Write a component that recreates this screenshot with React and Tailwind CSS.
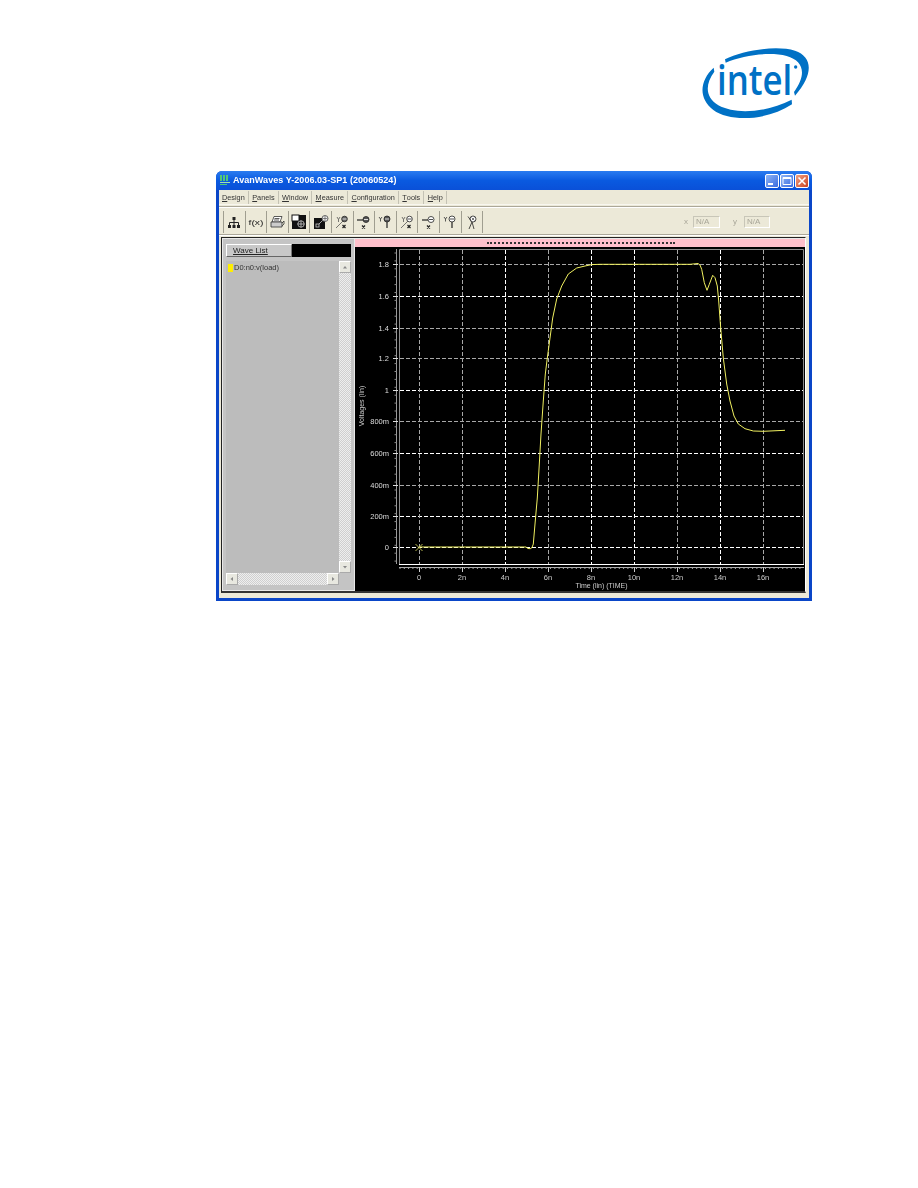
import React from 'react'

const font = { fontFamily: '"Liberation Sans", Arial, sans-serif' }

const menus = ['Design', 'Panels', 'Window', 'Measure', 'Configuration', 'Tools', 'Help']

const xLabels = [
  ['0', 419, false], ['2n', 462, false], ['4n', 505, true], ['6n', 548, false], ['8n', 591, true],
  ['10n', 634, true], ['12n', 677, false], ['14n', 720, true], ['16n', 763, false],
]
const yLabels = [
  ['1.8', 263, false], ['1.6', 295, true], ['1.4', 327, false], ['1.2', 357, false], ['1', 389, true],
  ['800m', 420, false], ['600m', 452, true], ['400m', 484, false], ['200m', 515, true], ['0', 546, true],
]

const curve = '419,546 526,546 528,547.5 530.3,547.7 532,546.5 533.3,543 535,523 537.3,497 539.3,463 541,433 543.3,400 545.3,373 547.3,357 550,337 552.7,317 556.7,298 561.7,285 568.3,273 576.7,267 585,265 591.7,263.6 600,263.3 690,263.3 698,262.5 700,264 701.7,268.3 704.3,281.7 707,289.3 709.3,283.3 712.7,274.3 715,276.7 717.3,285 718.7,300 720.7,327 723.3,357 726.7,383 730,400 734,415 738.3,423 745,427.7 753.3,430 763.3,430.3 785,429.3'

function IntelLogo() {
  return (
    <svg width="150" height="110" viewBox="0 0 450 330">
      <path fill="#0071c5" d="M135 88C190 60 290 45 345 62C398 80 402 132 345 197L342 186C382 132 370 92 320 78C270 65 190 75 137 98Z" />
      <path fill="#0071c5" d="M101 113C60 150 53 205 100 240C150 277 262 272 336 223L335 209C262 246 170 256 115 226C75 202 75 162 103 125Z" />
      <text x="111" y="195" textLength="226" lengthAdjust="spacingAndGlyphs" fontSize="122" fontWeight="600" fill="#0071c5" style={{ fontFamily: '"Open Sans", sans-serif' }}>intel</text>
      <circle cx="347" cy="111" r="5" fill="#0071c5" />
    </svg>
  )
}

function WinButton({ kind }) {
  const bg = kind === 'close'
    ? 'bg-gradient-to-br from-[#f0a080] to-[#c8401c]'
    : 'bg-gradient-to-br from-[#8fb4f4] to-[#3a6ae0]'
  return (
    <div className={`w-[14px] h-[14px] rounded-[2px] border border-white flex items-center justify-center ${bg}`}>
      <svg width="10" height="10" viewBox="0 0 10 10">
        {kind === 'min' && <rect x="1" y="7" width="5" height="2" fill="#fff" />}
        {kind === 'max' && <path d="M1 1.5h8v7h-8zM1 2.5h8" fill="none" stroke="#fff" strokeWidth="1" />}
        {kind === 'close' && <path d="M1.5 1.5l7 7M8.5 1.5l-7 7" stroke="#fff" strokeWidth="1.6" />}
      </svg>
    </div>
  )
}

// toolbar icons share a 16x16 box
function ToolIcon({ name }) {
  const stroke = { stroke: '#222', strokeWidth: 1, fill: 'none' }
  let body = null
  if (name === 'tree') {
    body = (
      <>
        <rect x="6.5" y="3" width="3" height="3" fill="#222" />
        <rect x="2" y="11" width="3" height="3" fill="#222" />
        <rect x="6.5" y="11" width="3" height="3" fill="#222" />
        <rect x="11" y="11" width="3" height="3" fill="#222" />
        <path d="M8 6v5M3.5 11V8.5h9V11" {...stroke} />
      </>
    )
  } else if (name === 'fx') {
    body = <text x="0.5" y="11" fontSize="8" fill="#222" textLength="15" lengthAdjust="spacingAndGlyphs" style={{ fontFamily: '"Liberation Sans", sans-serif' }}>f(x)</text>
  } else if (name === 'print') {
    body = (
      <>
        <path d="M5 2.5h8l-2 5.5H3z" fill="#fff" stroke="#333" strokeWidth="0.8" />
        <path d="M2 8h11v5H2z" fill="#ccc" stroke="#333" strokeWidth="0.8" />
        <path d="M5.5 4.5h5M5 6h5M13 9l2-2v3l-2 2" stroke="#333" strokeWidth="0.8" fill="none" />
      </>
    )
  } else if (name === 'black1') {
    body = (
      <>
        <rect x="1" y="1" width="14" height="14" fill="#111" />
        <rect x="1" y="1" width="7" height="6" fill="#fff" stroke="#111" />
        <circle cx="10" cy="10" r="3.2" fill="none" stroke="#ccc" strokeWidth="0.8" />
        <path d="M10 6.5v7M6.5 10h7" stroke="#ccc" strokeWidth="0.8" />
      </>
    )
  } else if (name === 'black2') {
    body = (
      <>
        <rect x="1" y="4" width="11" height="11" fill="#111" />
        <rect x="3" y="10" width="3" height="3" fill="none" stroke="#ccc" strokeWidth="0.8" />
        <path d="M6 10l4-4" stroke="#ccc" strokeWidth="0.8" />
        <circle cx="12" cy="4.5" r="3" fill="#eee" stroke="#444" strokeWidth="0.8" />
        <path d="M12 2v5M9.5 4.5h5" stroke="#444" strokeWidth="0.6" />
      </>
    )
  } else if (name === 'yxPlus' || name === 'yxMinus') {
    body = (
      <>
        <path d="M3 3l1.5 2.5L6 3M4.5 5.5V8M2 14l7-7" stroke="#444" strokeWidth="0.7" fill="none" />
        <circle cx="10.5" cy="5" r="2.8" fill={name === 'yxPlus' ? '#666' : '#fff'} stroke="#222" strokeWidth="0.8" />
        <path d="M8.5 5h4" stroke={name === 'yxPlus' ? '#fff' : '#222'} strokeWidth="0.8" />
        <path d="M8.5 11l3 3M11.5 11l-3 3" stroke="#222" strokeWidth="1.2" />
      </>
    )
  } else if (name === 'xPlus' || name === 'xMinus') {
    body = (
      <>
        <path d="M1 6h6" stroke="#222" strokeWidth="1.2" />
        <circle cx="10" cy="5.5" r="3" fill={name === 'xPlus' ? '#555' : '#fff'} stroke="#222" strokeWidth="0.8" />
        <path d="M8 5.5h4" stroke={name === 'xPlus' ? '#fff' : '#222'} strokeWidth="0.8" />
        <path d="M6 11.5l3 3M9 11.5l-3 3" stroke="#222" strokeWidth="1.2" />
      </>
    )
  } else if (name === 'yPlus' || name === 'yMinus') {
    body = (
      <>
        <path d="M2 3l1.5 2L5 3M3.5 5v2.5" stroke="#333" strokeWidth="0.8" fill="none" />
        <circle cx="10" cy="5" r="3" fill={name === 'yPlus' ? '#555' : '#fff'} stroke="#222" strokeWidth="0.8" />
        <path d="M8 5h4" stroke={name === 'yPlus' ? '#fff' : '#222'} strokeWidth="0.8" />
        <path d="M10 8v6" stroke="#222" strokeWidth="1.2" />
      </>
    )
  } else if (name === 'last') {
    body = (
      <>
        <circle cx="9" cy="5" r="3" fill="#fff" stroke="#222" strokeWidth="0.8" />
        <path d="M7.5 3.5l3 3M10.5 3.5l-3 3" stroke="#222" strokeWidth="0.6" />
        <path d="M4 2.5l2.5 3.5M5 15l3-7 2 7" {...stroke} strokeWidth="0.8" />
      </>
    )
  }
  return <svg width="16" height="16" viewBox="0 0 16 16">{body}</svg>
}

const tools = ['tree', 'fx', 'print', 'black1', 'black2', 'yxPlus', 'xPlus', 'yPlus', 'yxMinus', 'xMinus', 'yMinus', 'last']

function ScrollArrow({ dir }) {
  const d = { up: 'M2 5.5L4 3l2 2.5z', down: 'M2 3l2 2.5L6 3z', left: 'M5 2L2.5 4L5 6z', right: 'M3 2L5.5 4L3 6z' }[dir]
  return (
    <div className="w-[12px] h-[12px] shrink-0 bg-[#e8e8e0] border-t border-l border-white border-r border-b border-r-[#aaa] border-b-[#aaa] flex items-center justify-center">
      <svg width="8" height="8" viewBox="0 0 8 8"><path d={d} fill="#888" /></svg>
    </div>
  )
}

function Plot() {
  const labelStyle = { fontFamily: '"Liberation Sans", sans-serif', fontSize: 7.5 }
  const titleStyle = { fontFamily: '"Liberation Sans", sans-serif', fontSize: 7 }
  const minorX = []
  for (let x = 400; x < 804; x += 4.3) minorX.push(x)
  const minorY = []
  for (let y = 252; y < 562; y += 7.9) minorY.push(y)
  return (
    <svg className="block" width="450" height="344" viewBox="355 246 450 344">
      <rect x="355" y="246" width="450" height="344" fill="#000" />
      {yLabels.map(([t, y, bright]) => (
        <path key={t} d={`M400 ${y + 0.5}H803`} stroke={bright ? '#fff' : '#a8a8a8'} strokeDasharray="4 2" />
      ))}
      {xLabels.map(([t, x, bright]) => (
        <path key={t} d={`M${x + 0.5} 249V563`} stroke={bright ? '#fff' : '#a8a8a8'} strokeDasharray="4 2" />
      ))}
      <path d="M399.5 563V248.5H803.5V563" fill="none" stroke="#8a8a8a" />
      <path d="M399 563.5H804" stroke="#fff" />
      <path d="M396.5 248V563" stroke="#9a9a9a" />
      {minorY.map(y => <path key={y} d={`M394.5 ${y}h2`} stroke="#888" />)}
      {yLabels.map(([t, y]) => <path key={t} d={`M393 ${y + 0.5}h5`} stroke="#ddd" />)}
      <path d="M399 566.5H804" stroke="#aaa" />
      {minorX.map(x => <path key={x} d={`M${x} 566v2`} stroke="#aaa" />)}
      {xLabels.map(([t, x]) => <path key={t} d={`M${x + 0.5} 566v5`} stroke="#ccc" />)}
      <polyline points={curve} fill="none" stroke="#f0f060" strokeWidth="1" />
      <path d="M415.5 543l7 7M422.5 543l-7 7" stroke="#b8b850" />
      {yLabels.map(([t, y]) => (
        <text key={t} x="389" y={y + 3} textAnchor="end" fill="#ddd" style={labelStyle}>{t}</text>
      ))}
      {xLabels.map(([t, x]) => (
        <text key={t} x={x} y="579" textAnchor="middle" fill="#ccc" style={labelStyle}>{t}</text>
      ))}
      <text x="601.5" y="587" textAnchor="middle" fill="#ccc" style={titleStyle}>Time (lin) (TIME)</text>
      <text transform="translate(364 405) rotate(-90)" textAnchor="middle" fill="#ccc" style={titleStyle}>Voltages (lin)</text>
    </svg>
  )
}

export default function App() {
  return (
    <div className="w-[918px] h-[1188px] bg-white overflow-hidden pt-[30px]" style={font}>
      <div className="pl-[680px] h-[110px]">
        <IntelLogo />
      </div>

      {/* app window */}
      <div className="ml-[216px] mt-[31px] w-[596px] h-[430px] flex flex-col rounded-t-[6px] bg-[#0a46c8] blur-[0.3px]">
        <div className="h-[19px] shrink-0 flex items-center rounded-t-[6px] bg-gradient-to-b from-[#2a7cf0] via-[#0a5ae0] to-[#0a50d8] pl-[4px] pr-[3px]">
          <div className="w-[11px] h-[11px] flex flex-col gap-[1px]">
            <div className="h-[6px] flex gap-[1px]">
              <div className="w-[2px] bg-[#52c878]" />
              <div className="w-[2px] bg-[#52c878]" />
              <div className="w-[2px] bg-[#52c878]" />
            </div>
            <div className="h-[1px] w-[10px] bg-[#a0e0b0]" />
            <div className="h-[1px] w-[7px] bg-[#52c878]" />
          </div>
          <span className="ml-[2px] text-[9px] font-bold text-white tracking-[0.05px] whitespace-nowrap">AvanWaves Y-2006.03-SP1 (20060524)</span>
          <div className="ml-auto flex gap-[1px]">
            <WinButton kind="min" />
            <WinButton kind="max" />
            <WinButton kind="close" />
          </div>
        </div>

        <div className="mx-[3px] mb-[3px] flex-1 min-h-0 flex flex-col bg-[#ece9d8]">
          {/* menu */}
          <div className="h-[14px] mt-[1px] shrink-0 flex items-center border-b border-[#f8f7f0] pl-[3px]">
            {menus.map(m => (
              <div key={m} className="h-full flex items-center pr-[3px] mr-[3.5px] text-[7.3px] leading-none text-[#333] whitespace-nowrap border-r border-[#c4c2b4]">
                <span className="underline">{m[0]}</span>{m.slice(1)}
              </div>
            ))}
          </div>
          <div className="h-[1px] mt-[1px] shrink-0 bg-[#aca899]" />
          <div className="h-[1px] shrink-0 bg-white" />

          {/* toolbar */}
          <div className="h-[26px] shrink-0 flex items-center pl-[4px] pt-[1px]">
            <div className="flex items-center border-l border-[#a09e90]">
              {tools.map(name => (
                <div key={name} className="w-[21.6px] h-[22px] flex items-center justify-center border-r border-[#a09e90]">
                  <ToolIcon name={name} />
                </div>
              ))}
            </div>
            <div className="ml-auto flex items-center text-[8px] text-[#a8a698] pr-[39px]">
              <span className="mr-[5px]">x</span>
              <div className="w-[27px] h-[12px] border border-[#c8c6b8] border-r-white border-b-white flex items-center pl-[2px] mr-[13px]">N/A</div>
              <span className="mr-[7px]">y</span>
              <div className="w-[26px] h-[12px] border border-[#c8c6b8] border-r-white border-b-white flex items-center pl-[2px]">N/A</div>
            </div>
          </div>
          <div className="h-[1px] shrink-0 bg-[#aca899]" />
          <div className="h-[1px] shrink-0 bg-white" />

          {/* main */}
          <div className="h-[356px] shrink-0 mt-[1px] ml-[2px] mr-[3px] flex border-t border-l border-[#222] border-b-2 border-b-[#333] border-r border-r-[#fff]">
            <div className="w-[133px] shrink-0 bg-[#c4c4c4] border border-[#e8e8e8] px-[3px] pt-[5px] pb-[5px] flex flex-col">
              <div className="h-[13px] flex shrink-0 bg-black">
                <div className="w-[66px] bg-[#c8c8c8] border-t border-l border-white border-r border-r-[#777] border-b border-b-[#666] flex items-center pl-[6px] text-[8px] text-[#222] leading-none underline">
                  Wave List
                </div>
              </div>
              <div className="mt-[4px] flex-1 min-h-0 flex flex-col">
                <div className="flex-1 flex min-h-0">
                  <div className="flex-1 bg-[#bcbcbc] pl-[2px] pt-[2px]">
                    <div className="flex items-center h-[9px]">
                      <div className="w-[5px] h-[8px] bg-[#ffee00]" />
                      <span className="ml-[1px] text-[7.5px] leading-none text-[#333] whitespace-nowrap">D0:n0:v(load)</span>
                    </div>
                  </div>
                  <div className="w-[12px] flex flex-col bg-[image:repeating-conic-gradient(#cfcfcf_0_25%,#eeeeee_0_50%)] bg-[length:2px_2px]">
                    <ScrollArrow dir="up" />
                    <div className="flex-1" />
                    <ScrollArrow dir="down" />
                  </div>
                </div>
                <div className="h-[12px] flex shrink-0 pr-[12px]">
                  <div className="flex-1 flex bg-[image:repeating-conic-gradient(#cfcfcf_0_25%,#eeeeee_0_50%)] bg-[length:2px_2px]">
                    <ScrollArrow dir="left" />
                    <div className="flex-1" />
                    <ScrollArrow dir="right" />
                  </div>
                </div>
              </div>
            </div>

            <div className="flex-1 flex flex-col min-w-0">
              <div className="h-[9px] shrink-0 bg-[#ffc0cb] border-t border-[#e8e8e8] flex items-center pl-[132px]">
                <div className="w-[188px] h-0 border-t-2 border-dotted border-[#333]" />
              </div>
              <Plot />
            </div>
          </div>
        </div>
      </div>
    </div>
  )
}
